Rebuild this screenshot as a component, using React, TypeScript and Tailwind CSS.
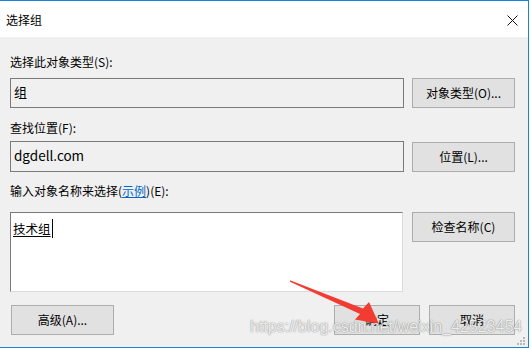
import React from 'react'

const font = { fontFamily: '"Microsoft YaHei UI", "Noto Sans CJK SC", "Noto Sans", sans-serif' }

function Btn({ label, className = '' }: { label: string; className?: string }) {
  return (
    <div
      className={`flex h-[30px] items-center justify-center border border-[#adadad] bg-[#e1e1e1] text-[12px] text-black ${className}`}
    >
      {label}
    </div>
  )
}

function Grip() {
  const dots = [
    [6, 0],
    [3, 3],
    [6, 3],
    [0, 6],
    [3, 6],
    [6, 6],
  ]
  return (
    <svg className="absolute bottom-[2px] right-[3px]" width="8" height="8" aria-hidden>
      {dots.map(([x, y], i) => (
        <rect key={i} x={x} y={y} width="2" height="2" fill="#b8b8b8" />
      ))}
    </svg>
  )
}

export default function App() {
  return (
    <div className="h-[349px] w-[531px] overflow-hidden bg-white" style={font}>
      <div className="relative flex h-[348px] w-[529px] flex-col border-y border-r border-[#1883d7]">
        {/* title bar */}
        <div className="flex h-[36px] shrink-0 items-center justify-between bg-white pl-[6px] pr-[10px]">
          <span className="mt-[2px] text-[12px] text-black">选择组</span>
          <svg width="11" height="11" viewBox="0 0 11 11" className="mt-[2px]" aria-hidden>
            <path d="M0.5 0.5 L10.5 10.5 M10.5 0.5 L0.5 10.5" stroke="#111" strokeWidth="1" />
          </svg>
        </div>

        {/* body */}
        <div className="flex flex-1 flex-col bg-[#f0f0f0] pl-[10px] pr-[13px] text-[12px] text-black">
          <div className="mt-[17px] h-4 leading-4">选择此对象类型(S):</div>
          <div className="mt-[8px] flex gap-[8px]">
            <div className="h-[30px] w-[394px] border border-[#7a7a7a] bg-[#f0f0f0] pl-[3px] pt-[3px] text-[13px] leading-5">
              组
            </div>
            <Btn label="对象类型(O)..." className="w-[103px]" />
          </div>

          <div className="mt-[12px] h-4 leading-4">查找位置(F):</div>
          <div className="mt-[5px] flex items-end gap-[8px]">
            <div className="h-[31px] w-[394px] border border-[#7a7a7a] bg-[#f0f0f0] pl-[3px] pt-[3px] text-[13.5px] leading-5">
              dgdell.com
            </div>
            <Btn label="位置(L)..." className="w-[103px]" />
          </div>

          <div className="mt-[11px] h-4 leading-4">
            输入对象名称来选择(<span className="text-[#0066cc] underline">示例</span>)(E):
          </div>
          <div className="mt-[13px] flex items-start gap-[9px]">
            <div className="h-[80px] w-[393px] border border-b-[#dadada] border-l-[#7a7a7a] border-r-[#dadada] border-t-[#7a7a7a] bg-white pl-[2px] pt-[6px] text-[12.5px] leading-5">
              <span className="border-r border-black pr-px underline underline-offset-2">技术组</span>
            </div>
            <Btn label="检查名称(C)" className="w-[103px]" />
          </div>

          <div className="mt-[13px] flex">
            <Btn label="高级(A)..." className="ml-px w-[103px]" />
            <Btn label="确定" className="ml-auto w-[86px]" />
            <Btn label="取消" className="ml-[9px] w-[86px]" />
          </div>
        </div>

        <Grip />

        {/* annotation arrow */}
        <svg className="pointer-events-none absolute left-0 top-0" width="529" height="348" aria-hidden>
          <polygon
            points="290,279.3 363,307.5 369,301 379,323 355,318.5 360,313 290,280.7"
            fill="#f23c32"
          />
        </svg>

        {/* watermark */}
        <div
          className="pointer-events-none absolute left-[250px] top-[316px] text-[16px] leading-5 text-white/85"
          style={{
            fontFamily: '"Liberation Sans", Arial, sans-serif',
            textShadow: '0 0 1px rgba(0,0,0,0.45), 0 0 2px rgba(0,0,0,0.2)',
          }}
        >
          https://blog.csdn.net/weixin_42523454
        </div>
      </div>
    </div>
  )
}
